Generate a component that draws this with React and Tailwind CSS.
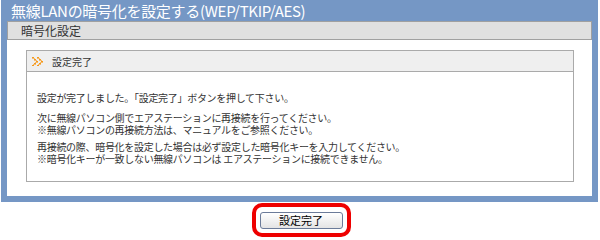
import React from "react";

const jp = { fontFamily: '"Noto Sans CJK JP", "Noto Sans", sans-serif' };

const Arrow = () => (
  <svg width="12" height="9" viewBox="0 0 12 9" className="mr-[8px]">
    {[
      [0, 0], [2, 2], [4, 4], [2, 6], [0, 8],
      [5, 0], [7, 2], [9, 4], [7, 6], [5, 8],
    ].map(([x, y], i) => (
      <rect key={i} x={x} y={y - 0} width="2" height="1.6" fill="#f39a1e" />
    ))}
    {[
      [1, 1], [3, 3], [3, 5], [1, 7],
      [6, 1], [8, 3], [8, 5], [6, 7],
    ].map(([x, y], i) => (
      <rect key={"b" + i} x={x} y={y} width="2" height="1" fill="#f7b968" />
    ))}
  </svg>
);

const App = () => {
  return (
    <div className="w-[600px] h-[240px] bg-white" style={jp}>
      <div className="w-[597px] ml-[1px] bg-[#7597c5] px-[6px] pb-[6px]">
        <div className="h-[21px] flex items-center pl-[4px] text-white text-[15px] leading-none tracking-[-0.3px]">
          無線LANの暗号化を設定する(WEP/TKIP/AES)
        </div>
        <div className="h-[19px] bg-[#e0e0e0] border border-[#a0a0a0] flex items-center pl-[13px] text-[12px] text-[#333]">
          暗号化設定
        </div>
        <div className="bg-white h-[156px] pl-[19px] pr-[18px] pt-[10px]">
          <div className="border border-[#aaaaaa] h-[132px]">
            <div className="h-[21px] bg-[#efefef] border-b border-[#aaaaaa] flex items-center pl-[5px] text-[10px] text-[#333]">
              <Arrow />
              設定完了
            </div>
            <div className="pl-[10px] pt-[20px] text-[10px] leading-[12px] text-[#333] tracking-[-0.3px]">
              <p>設定が完了しました。「設定完了」ボタンを押して下さい。</p>
              <p className="mt-[8px]">次に無線パソコン側でエアステーションに再接続を行ってください。</p>
              <p>※無線パソコンの再接続方法は、マニュアルをご参照ください。</p>
              <p className="mt-[5px]">再接続の際、暗号化を設定した場合は必ず設定した暗号化キーを入力してください。</p>
              <p>※暗号化キーが一致しない無線パソコンは エアステーションに接続できません。</p>
            </div>
          </div>
        </div>
      </div>
      <div className="flex justify-center pt-[1px] pl-[2px]">
        <div className="w-[99px] h-[34px] border-[4px] border-[#ee0000] rounded-[10px] flex items-center justify-center">
          <button className="w-[83px] h-[17px] border border-[#6b7b99] rounded-[3px] bg-gradient-to-b from-white to-[#e4e4e4] text-[11px] leading-none text-black">
            設定完了
          </button>
        </div>
      </div>
    </div>
  );
};

export default App;
